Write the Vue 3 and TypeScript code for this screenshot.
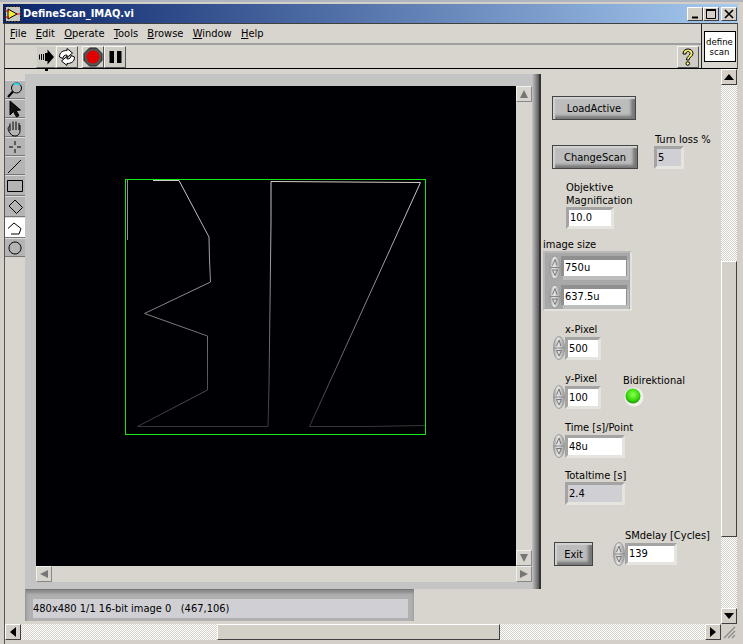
<script setup lang="ts">
interface Tool {
  name: string;
  d: string;
  fill?: string;
  tall?: boolean;
  active?: boolean;
}

const menus = [
  { key: 'F', rest: 'ile' },
  { key: 'E', rest: 'dit' },
  { key: 'O', rest: 'perate' },
  { key: 'T', rest: 'ools' },
  { key: 'B', rest: 'rowse' },
  { key: 'W', rest: 'indow' },
  { key: 'H', rest: 'elp' },
];

// tool palette next to the image display
const tools: Tool[] = [
  { name: 'zoom', d: '' },
  { name: 'pointer', d: 'M5 2v14l3.500-3.500 3 5.500 2.500-1.500-3-5 4.500-.5z', fill: '#111' },
  { name: 'hand', d: 'M5 13V5.500M8 12V3.500M11 12V3.500M14 12V5M5 8C2 9 3 13 5 15c1 1.500 2 3 5 3s5-2 5-6V7' },
  { name: 'cross', d: 'M10 4v4M10 12v4M4 10h4M12 10h4' },
  { name: 'line', d: 'M3 17L16 4' },
  { name: 'rect', d: 'M2.500 4.500h15v11h-15z', tall: true },
  { name: 'oriented', d: 'M10 3l7.500 7.500-6 6-7.500-7.500z', tall: true },
  { name: 'poly', d: 'M3 10.500l6-5.500 7 5.500M16 10.500l-2 5.500H6', tall: true, active: true },
  { name: 'circle', d: 'M10 4a6 6 0 1 0 .01 0' },
];

const statusText = '480x480 1/1 16-bit image 0   (467,106)';

const scanPath =
  'M153 180.500H179L209 237L209.500 260L210.500 282L144.500 313.500L207.500 336V390L137.500 426.500H268L269 385L270 305L271 222V181.500L346 182L420.500 182.500L309.500 426.500H367L425 425.500';
</script>

<template>
  <div class="app">
    <svg class="defs" width="0" height="0" aria-hidden="true">
      <defs>
        <linearGradient id="spinFace" x1="0" x2="1" y1="0" y2="0">
          <stop offset="0" stop-color="#a0a0a0" />
          <stop offset="0.4" stop-color="#e8e8e8" />
          <stop offset="1" stop-color="#9c9c9c" />
        </linearGradient>
        <linearGradient id="scanFade" gradientUnits="userSpaceOnUse" x1="0" x2="0" y1="180" y2="430">
          <stop offset="0" stop-color="#d0d0d0" />
          <stop offset="0.45" stop-color="#8c8c8c" />
          <stop offset="1" stop-color="#363636" />
        </linearGradient>
        <radialGradient id="ledFace" cx="0.5" cy="0.4" r="0.6">
          <stop offset="0" stop-color="#8cff50" />
          <stop offset="0.6" stop-color="#3fe010" />
          <stop offset="1" stop-color="#1c9a08" />
        </radialGradient>
        <symbol id="spinner" viewBox="0 0 12 24">
          <ellipse cx="6" cy="12" rx="5.500" ry="11.500" fill="url(#spinFace)" stroke="#9a9a9a" />
          <path d="M1 12h10" stroke="#888" />
          <path d="M6 4L3.500 10M6 4l2 6" fill="none" stroke="#777" />
          <path d="M3.500 14.500h5L6 20z" fill="none" stroke="#777" />
        </symbol>
      </defs>
    </svg>

    <header class="titlebar">
      <svg class="vi-icon" width="16" height="16" viewBox="0 0 16 16">
        <rect x="0.500" y="0.500" width="15" height="15" fill="#c8c8c0" stroke="#000" stroke-dasharray="2 1" />
        <path d="M3 3l9 5-9 5z" fill="#f4ea40" stroke="#000" />
        <path d="M0 5h4M0 11h4" stroke="#c00" />
        <path d="M12 8h4" stroke="#e00" />
      </svg>
      <span class="title-text">DefineScan_IMAQ.vi</span>
      <div class="caption-btns">
        <button class="cap"><svg width="14" height="12" viewBox="0 0 14 12"><path d="M4 9.500h6" stroke="#000" stroke-width="2" /></svg></button>
        <button class="cap"><svg width="14" height="12" viewBox="0 0 14 12"><path d="M2.500 1.500h9v9h-9z" fill="none" stroke="#000" /><path d="M2 2h10" stroke="#000" stroke-width="2" /></svg></button>
        <button class="cap cap-close"><svg width="14" height="12" viewBox="0 0 14 12"><path d="M3 2l8 8M11 2l-8 8" stroke="#000" stroke-width="1.700" /></svg></button>
      </div>
    </header>

    <div class="head">
      <div class="head-left">
        <nav class="menubar">
          <span v-for="m in menus" :key="m.key" class="menu-item"><u>{{ m.key }}</u>{{ m.rest }}</span>
        </nav>
        <div class="toolbar">
          <button class="tb-btn tb-flat">
            <svg width="18" height="18" viewBox="0 0 18 18">
              <path d="M2.500 6.500V11.500M4.500 6V12M6.500 6V12" stroke="#000" />
              <path d="M8 5h2.500V1.500L17 9l-6.500 7.500V13H8z" fill="#000" />
            </svg>
          </button>
          <button class="tb-btn">
            <svg width="20" height="20" viewBox="0 0 20 20">
              <path d="M2.500 10C2.500 5 6 3.500 10 3.500V1.500l5.500 4.500L10 10.500V8C7.500 8 6 9 6 11.500z" fill="#fff" stroke="#000" />
              <path d="M17.500 10c0 5-3.500 6.500-7.500 6.500v2l-5.500-4.500L10 9.500V12c2.500 0 4-1 4-3.500z" fill="#fff" stroke="#000" />
            </svg>
          </button>
          <button class="tb-btn tb-gap">
            <svg width="20" height="20" viewBox="0 0 20 20">
              <path d="M6.500 1h7L19 6.500v7L13.500 19h-7L1 13.500v-7z" fill="#555" stroke="#222" />
              <circle cx="10" cy="10" r="6.500" fill="#e00000" />
            </svg>
          </button>
          <button class="tb-btn">
            <svg width="20" height="20" viewBox="0 0 20 20">
              <path d="M4.500 4h4.500v12H4.500zM12 4h4.500v12H12z" fill="#000" />
            </svg>
          </button>
          <button class="tb-btn tb-help">
            <svg width="18" height="20" viewBox="0 0 18 20">
              <path d="M4 7c0-3 2-5 5-5s5 2 5 4.500c0 3-4 3.500-4 6.500H7.500c0-4 3.500-4 3.500-6.500C11 5 10 4.500 9 4.500 8 4.500 7 5 7 7z" fill="#f8f070" stroke="#000" />
              <circle cx="8.800" cy="16.500" r="1.800" fill="#f8f070" stroke="#000" />
            </svg>
          </button>
        </div>
      </div>
      <div class="vi-tile"><span>define<br />scan</span></div>
    </div>

    <div class="body">
      <div class="panel">
        <div class="left-side">
          <i class="label-tail"></i>
          <div class="work">
            <div class="palette">
              <div
                v-for="t in tools"
                :key="t.name"
                class="tool"
                :class="{ 'tool-tall': t.tall, 'tool-on': t.active }"
              >
                <svg width="20" height="20" viewBox="0 0 20 20">
                  <template v-if="t.name === 'zoom'">
                    <circle cx="11.500" cy="8" r="5" fill="#b4b4b4" stroke="#000" />
                    <path d="M8.500 4.500a5 5 0 0 1 6.500 1" fill="none" stroke="#18d8e8" stroke-width="1.500" />
                    <path d="M8 11.500L3 17" stroke="#000" stroke-width="2.200" />
                  </template>
                  <path v-else :d="t.d" :fill="t.fill || 'none'" stroke="#000" />
                </svg>
              </div>
            </div>
            <div class="frame">
              <div class="display-row">
                <svg class="display" width="480" height="480" viewBox="36 86 480 480">
                  <rect x="36" y="86" width="480" height="480" fill="#000004" />
                  <rect x="125.500" y="179.500" width="300" height="255" fill="none" stroke="#12e812" />
                  <path d="M127.500 180V240" stroke="#909090" fill="none" />
                  <path :d="scanPath" fill="none" stroke="url(#scanFade)" />
                </svg>
                <div class="vbar-mini">
                  <button class="mini"><svg width="10" height="10" viewBox="0 0 10 10"><path d="M5 1l4 8H1z" fill="#777" /></svg></button>
                  <button class="mini"><svg width="10" height="10" viewBox="0 0 10 10"><path d="M1 1h8L5 9z" fill="#777" /></svg></button>
                </div>
              </div>
              <div class="hbar-mini">
                <button class="mini"><svg width="10" height="10" viewBox="0 0 10 10"><path d="M1 5l8-4v8z" fill="#777" /></svg></button>
                <button class="mini"><svg width="10" height="10" viewBox="0 0 10 10"><path d="M9 5L1 1v8z" fill="#777" /></svg></button>
              </div>
            </div>
          </div>
          <div class="status">
            <div class="status-text">{{ statusText }}</div>
          </div>
        </div>

        <aside class="controls">
          <button class="lv-btn btn-load">LoadActive</button>

          <div class="row-change">
            <button class="lv-btn btn-change">ChangeScan</button>
            <div class="turn">
              <div class="lbl">Turn loss %</div>
              <div class="num num-gray turn-box">5</div>
            </div>
          </div>

          <div class="objective">
            <div class="lbl">Objektive<br />Magnification</div>
            <div class="num obj-box">10.0</div>
          </div>

          <div class="lbl size-lbl">image size</div>
          <div class="cluster">
            <div class="cluster-row">
              <svg class="spin" width="12" height="25"><use href="#spinner" /></svg>
              <div class="cluster-field">750u</div>
            </div>
            <div class="cluster-row">
              <svg class="spin" width="12" height="25"><use href="#spinner" /></svg>
              <div class="cluster-field">637.5u</div>
            </div>
          </div>

          <div class="field-group group-x">
            <div class="lbl">x-Pixel</div>
            <div class="spin-row">
              <svg class="spin" width="12" height="24"><use href="#spinner" /></svg>
              <div class="num pixel-box">500</div>
            </div>
          </div>

          <div class="row-y">
            <div class="field-group">
              <div class="lbl">y-Pixel</div>
              <div class="spin-row">
                <svg class="spin" width="12" height="24"><use href="#spinner" /></svg>
                <div class="num pixel-box">100</div>
              </div>
            </div>
            <div class="bidir">
              <div class="lbl">Bidirektional</div>
              <svg class="led" width="20" height="20" viewBox="0 0 20 20">
                <circle cx="10" cy="10" r="9.500" fill="#f0f0ec" />
                <circle cx="9" cy="9" r="7.500" fill="url(#ledFace)" />
              </svg>
            </div>
          </div>

          <div class="field-group group-time">
            <div class="lbl">Time [s]/Point</div>
            <div class="spin-row">
              <svg class="spin" width="12" height="24"><use href="#spinner" /></svg>
              <div class="num time-box">48u</div>
            </div>
          </div>

          <div class="total">
            <div class="lbl">Totaltime [s]</div>
            <div class="num num-gray total-box">2.4</div>
          </div>

          <div class="row-exit">
            <button class="lv-btn btn-exit">Exit</button>
            <div class="smdelay">
              <div class="lbl sm-lbl">SMdelay [Cycles]</div>
              <div class="spin-row">
                <svg class="spin" width="12" height="24"><use href="#spinner" /></svg>
                <div class="num sm-box">139</div>
              </div>
            </div>
          </div>
        </aside>
      </div>

      <div class="vscroll">
        <button class="sb-btn"><svg width="10" height="6" viewBox="0 0 10 6"><path d="M5 0l5 6H0z" fill="#000" /></svg></button>
        <div class="track track-a"></div>
        <div class="thumb-v"></div>
        <div class="track track-b"></div>
        <button class="sb-btn"><svg width="10" height="6" viewBox="0 0 10 6"><path d="M0 0h10L5 6z" fill="#000" /></svg></button>
      </div>

      <div class="hscroll">
        <button class="sb-btn"><svg width="6" height="10" viewBox="0 0 6 10"><path d="M6 0v10L0 5z" fill="#000" /></svg></button>
        <div class="track track-c"></div>
        <div class="thumb-h"></div>
        <div class="track track-d"></div>
        <button class="sb-btn"><svg width="6" height="10" viewBox="0 0 6 10"><path d="M0 0v10l6-5z" fill="#000" /></svg></button>
      </div>
      <div class="grip">
        <svg width="15" height="15" viewBox="0 0 15 15"><path d="M14 3L3 14M14 7l-7 7M14 11l-3 3" stroke="#888" stroke-width="1.200" /></svg>
      </div>
    </div>
  </div>
</template>

<style scoped>
.app {
  box-sizing: border-box;
  width: 743px;
  height: 644px;
  overflow: hidden;
  display: flex;
  flex-direction: column;
  background: #d4d0c8;
  border-top: 2px solid #aeb4c0;
  padding: 2px 5px 0 3px;
  font-family: "DejaVu Sans", sans-serif;
  font-stretch: condensed;
  font-size: 11px;
  color: #000;
}
.defs {
  position: absolute;
}
button {
  padding: 0;
  font: inherit;
  color: inherit;
}

.titlebar {
  flex: none;
  height: 19px;
  display: flex;
  align-items: center;
  padding-left: 2px;
  padding-right: 1px;
  background: linear-gradient(90deg, #0a246a, #a6caf0);
  border-bottom: 1px solid #404040;
}
.vi-icon {
  flex: none;
  margin-right: 2px;
}
.title-text {
  font-size: 11px;
  font-weight: 700;
  color: #fff;
}
.caption-btns {
  margin-left: auto;
  display: flex;
}
.cap {
  box-sizing: border-box;
  width: 16px;
  height: 14px;
  display: flex;
  align-items: center;
  justify-content: center;
  background: #d4d0c8;
  border: 1px solid;
  border-color: #fff #404040 #404040 #fff;
}
.cap-close {
  margin-left: 2px;
}

.head {
  flex: none;
  height: 44px;
  display: flex;
  margin-left: 1px;
  border-left: 1px solid #555;
  border-right: 1px solid #555;
  border-bottom: 1px solid #000;
  background: #d8d5ce;
}
.head-left {
  flex: 1;
  display: flex;
  flex-direction: column;
  border-right: 1px solid #222;
}
.menubar {
  height: 19px;
  display: flex;
  align-items: center;
  gap: 9.300px;
  padding-left: 5px;
  border-bottom: 2px solid #a0a0a0;
}
.toolbar {
  flex: 1;
  display: flex;
  align-items: center;
  padding-left: 31px;
  padding-right: 2px;
}
.tb-btn {
  box-sizing: border-box;
  width: 22px;
  height: 22px;
  display: flex;
  align-items: center;
  justify-content: center;
  background: #cfccc6;
  border: 1px solid;
  border-color: #f4f4f0 #555 #555 #f4f4f0;
}
.tb-flat {
  width: 20px;
  border-color: #d8d5ce #d8d5ce #666 #d8d5ce;
}
.tb-gap {
  margin-left: 4px;
}
.tb-help {
  margin-left: auto;
}
.vi-tile {
  flex: none;
  width: 35px;
  display: flex;
  align-items: center;
  justify-content: center;
}
.vi-tile span {
  box-sizing: border-box;
  width: 32px;
  height: 31px;
  border: 1px solid #000;
  background: #fff;
  font-size: 9.500px;
  line-height: 10px;
  text-align: center;
  padding-top: 5px;
}

.body {
  flex: 1;
  min-height: 0;
  display: grid;
  grid-template-columns: 716px 16px 1px;
  grid-template-rows: 555px 16px;
  margin-left: 1px;
  border-left: 1px solid #555;
}
.panel {
  display: flex;
  background: #d8d5ce;
}
.left-side {
  width: 536px;
  position: relative;
  padding-top: 5px;
  box-sizing: border-box;
}
.label-tail {
  position: absolute;
  left: 40px;
  top: 0;
  width: 3px;
  height: 2px;
  background: #000;
}
.work {
  display: flex;
}
.palette {
  width: 20px;
  margin-top: 6px;
  align-self: flex-start;
  background: #b8b8b8;
}
.tool {
  height: 19px;
  display: flex;
  align-items: center;
  justify-content: center;
  background: #b4b4b4;
  border-top: 1px solid #dcdcdc;
  border-bottom: 1px solid #777;
  box-sizing: border-box;
}
.tool-tall {
  height: 21px;
}
.tool-on {
  background: #fff;
}
.frame {
  box-sizing: border-box;
  width: 516px;
  height: 515px;
  padding: 12px 0 0 11px;
  background: linear-gradient(90deg, #c4c4c4 0, #c4c4c4 507px, #5a5a5a 514px, #333 514px);
}
.display-row {
  display: flex;
}
.display {
  display: block;
  flex: none;
}
.vbar-mini {
  width: 16px;
  height: 480px;
  display: flex;
  flex-direction: column;
  justify-content: space-between;
  background: #d8d5ce;
}
.hbar-mini {
  width: 496px;
  height: 16px;
  display: flex;
  justify-content: space-between;
  background: #d8d5ce;
}
.mini {
  box-sizing: border-box;
  width: 16px;
  height: 16px;
  display: flex;
  align-items: center;
  justify-content: center;
  background: #d8d5ce;
  border: 1px solid;
  border-color: #f0f0ec #888 #888 #f0f0ec;
}
.status {
  box-sizing: border-box;
  width: 389px;
  height: 32px;
  margin-left: 20px;
  padding: 9px 6px 4px 7px;
  background: #b0b0b0;
  border-top: 1px solid #777;
  border-left: 1px solid #999;
  box-shadow: inset 0 3px 3px #8a8a8a;
}
.status-text {
  height: 19px;
  line-height: 19px;
  background: #d0d0d4;
  white-space: pre;
}

.controls {
  width: 180px;
  flex: none;
}
.lbl {
  line-height: 13px;
  white-space: nowrap;
}
.lv-btn {
  box-sizing: border-box;
  height: 24px;
  display: block;
  border: 1px solid #444;
  background: #bcbcbc;
  box-shadow: inset 2px 2px 1px #d2d2d2, inset -4px -3px 3px #777;
  font: inherit;
}
.btn-load {
  width: 84px;
  margin: 27px 0 0 11px;
}
.row-change {
  display: flex;
  align-items: flex-end;
  margin: 13px 0 0 11px;
}
.btn-change {
  width: 86px;
}
.turn {
  margin-left: 16px;
}
.turn .lbl {
  margin: 0 0 0 1px;
}
.num {
  box-sizing: border-box;
  height: 22px;
  line-height: 15px;
  padding-left: 1px;
  background: #fff;
  border: 3px solid;
  border-color: #a4a4a4 #e6e4de #e6e4de #a4a4a4;
  overflow: hidden;
}
.num-gray {
  background: #d0d0d4;
}
.turn-box {
  width: 30px;
  height: 23px;
  line-height: 17px;
}
.objective {
  margin: 12px 0 0 25px;
}
.obj-box {
  width: 48px;
}
.size-lbl {
  margin: 9px 0 0 2px;
}
.cluster {
  box-sizing: border-box;
  width: 89px;
  height: 60px;
  margin-left: 2px;
  padding: 2px 4px 0;
  display: flex;
  flex-direction: column;
  gap: 4px;
  background: #a8a8a8;
  border: 2px solid;
  border-color: #b8b8b8 #e4e2dc #e4e2dc #b8b8b8;
}
.cluster-row {
  display: flex;
  align-items: center;
  gap: 3px;
}
.cluster-field {
  width: 62px;
  height: 16px;
  line-height: 16px;
  padding-left: 1px;
  box-sizing: border-box;
  background: #fff;
  box-shadow: -1px -2px 0 2px #8f8f8f, 1px 2px 0 2px #bdbdbd;
}
.spin {
  display: block;
  flex: none;
}
.field-group {
  margin-left: 12px;
}
.field-group .lbl {
  margin-left: 12px;
}
.spin-row {
  display: flex;
  align-items: center;
  height: 24px;
}
.group-x {
  margin-top: 12px;
}
.pixel-box {
  width: 36px;
  height: 23px;
  line-height: 17px;
}
.row-y {
  display: flex;
  margin-top: 12px;
}
.bidir {
  margin: 2px 0 0 22px;
}
.led {
  display: block;
  margin: 0 0 0 1px;
}
.group-time {
  margin-top: 12px;
}
.time-box {
  width: 60px;
  height: 23px;
  line-height: 17px;
}
.total {
  margin: 11px 0 0 24px;
}
.total-box {
  width: 60px;
  height: 23px;
  line-height: 17px;
}
.row-exit {
  display: flex;
  align-items: flex-end;
  margin: 24px 0 0 13px;
}
.btn-exit {
  width: 39px;
}
.smdelay {
  margin-left: 20px;
}
.sm-lbl {
  margin-left: 12px;
}
.sm-box {
  width: 52px;
}

.vscroll {
  grid-column: 2;
  grid-row: 1;
  display: flex;
  flex-direction: column;
}
.hscroll {
  grid-column: 1;
  grid-row: 2;
  display: flex;
}
.sb-btn {
  box-sizing: border-box;
  flex: none;
  width: 16px;
  height: 16px;
  display: flex;
  align-items: center;
  justify-content: center;
  background: #d4d0c8;
  border: 1px solid;
  border-color: #fff #404040 #404040 #fff;
}
.track {
  background: repeating-conic-gradient(#ffffff 0 25%, #d4d0c8 0 50%) 0 0 / 2px 2px;
}
.track-a {
  height: 176px;
}
.thumb-v {
  box-sizing: border-box;
  height: 276px;
  background: #d4d0c8;
  border: 1px solid;
  border-color: #fff #404040 #404040 #fff;
}
.track-b {
  flex: 1;
}
.track-c {
  width: 196px;
}
.thumb-h {
  box-sizing: border-box;
  width: 283px;
  background: #d4d0c8;
  border: 1px solid;
  border-color: #fff #404040 #404040 #fff;
}
.track-d {
  flex: 1;
}
.grip {
  grid-column: 2;
  grid-row: 2;
  background: #d4d0c8;
}
</style>

<style>
html,
body {
  margin: 0;
  background: #d4d0c8;
}
</style>
